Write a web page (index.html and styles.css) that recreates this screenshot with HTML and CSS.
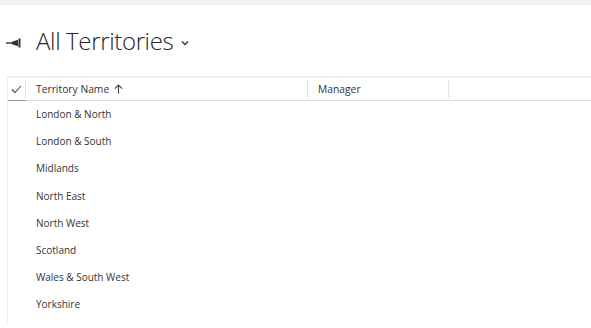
FILE: index.html
```html
<!DOCTYPE html>
<html>
<head>
<meta charset="utf-8">
<link rel="stylesheet" href="styles.css">
</head>
<body>
<div class="topbar"></div>
<div class="titlebar">
  <svg class="pin" width="16" height="10" viewBox="0 0 16 10"><path d="M0 5H7" stroke="#333" stroke-width="1.4" fill="none"/><path d="M6 3.8L12 1.8V8.2L6 6.2Z" fill="#333"/><rect x="12.5" y="0.5" width="2" height="9" fill="#333"/></svg>
  <h1 class="title">All Territories</h1>
  <svg class="chev" width="8" height="6" viewBox="0 0 8 6"><path d="M1 1.5L4 4.5L7 1.5" stroke="#333" stroke-width="1.3" fill="none"/></svg>
</div>
<div class="grid">
  <div class="head">
    <div class="check-cell">
      <svg width="11" height="9" viewBox="0 0 11 9"><path d="M1 4.5L4 7.5L10 1" stroke="#444" stroke-width="1.1" fill="none"/></svg>
    </div>
    <div class="col col-name">Territory Name <span class="arrow">
      <svg width="9" height="10" viewBox="0 0 9 10"><path d="M4.5 9.5V1M0.8 4.7L4.5 1L8.2 4.7" stroke="#444" stroke-width="1.1" fill="none"/></svg></span></div>
    <div class="col col-mgr">Manager</div>
    <div class="col-rest"></div>
  </div>
  <div class="rows">
    <div class="row">London &amp; North</div>
    <div class="row">London &amp; South</div>
    <div class="row">Midlands</div>
    <div class="row">North East</div>
    <div class="row">North West</div>
    <div class="row">Scotland</div>
    <div class="row">Wales &amp; South West</div>
    <div class="row">Yorkshire</div>
  </div>
</div>
</body>
</html>
```
FILE: styles.css
```css
html, body { margin: 0; padding: 0; background: #fff; }
body { font-family: "Open Sans", "Noto Sans", sans-serif; color: #333; width: 591px; height: 328px; overflow: hidden; }
.topbar { height: 5px; background: #f3f3f3; }
.titlebar { display: flex; align-items: center; height: 71px; padding-left: 6px; }
.pin { margin-right: 14px; margin-top: 4px; }
.title { font-family: "Open Sans", sans-serif; font-weight: 300; font-size: 24px; color: #262626; margin: 0; letter-spacing: -0.35px; }
.chev { margin-left: 8px; margin-top: 5px; }
.grid { margin-left: 7px; border-left: 1px solid #f0f0f0; }
.head { display: flex; height: 22px; border-top: 2px solid #ececec; border-bottom: 1px solid #dcdcdc; align-items: center; font-size: 10.3px; color: #333; }
.check-cell { width: 18px; display: flex; align-items: center; justify-content: center; border-right: 1px solid #e4e4e4; box-sizing: border-box; height: 18px; position: relative; }
.check-cell::after { content: ""; position: absolute; left: 0; right: -1px; bottom: -3px; height: 1px; background: #999; }
.col { height: 18px; display: flex; align-items: center; padding-left: 10px; box-sizing: border-box; border-right: 1px solid #e4e4e4; }
.col-name { width: 282px; }
.col-mgr { width: 141px; }
.arrow { display: inline-flex; margin-left: 5px; }
.rows { padding-top: 5px; }
.row { height: 27.2px; line-height: 16px; padding-left: 28px; font-size: 10px; color: #333; }
```
